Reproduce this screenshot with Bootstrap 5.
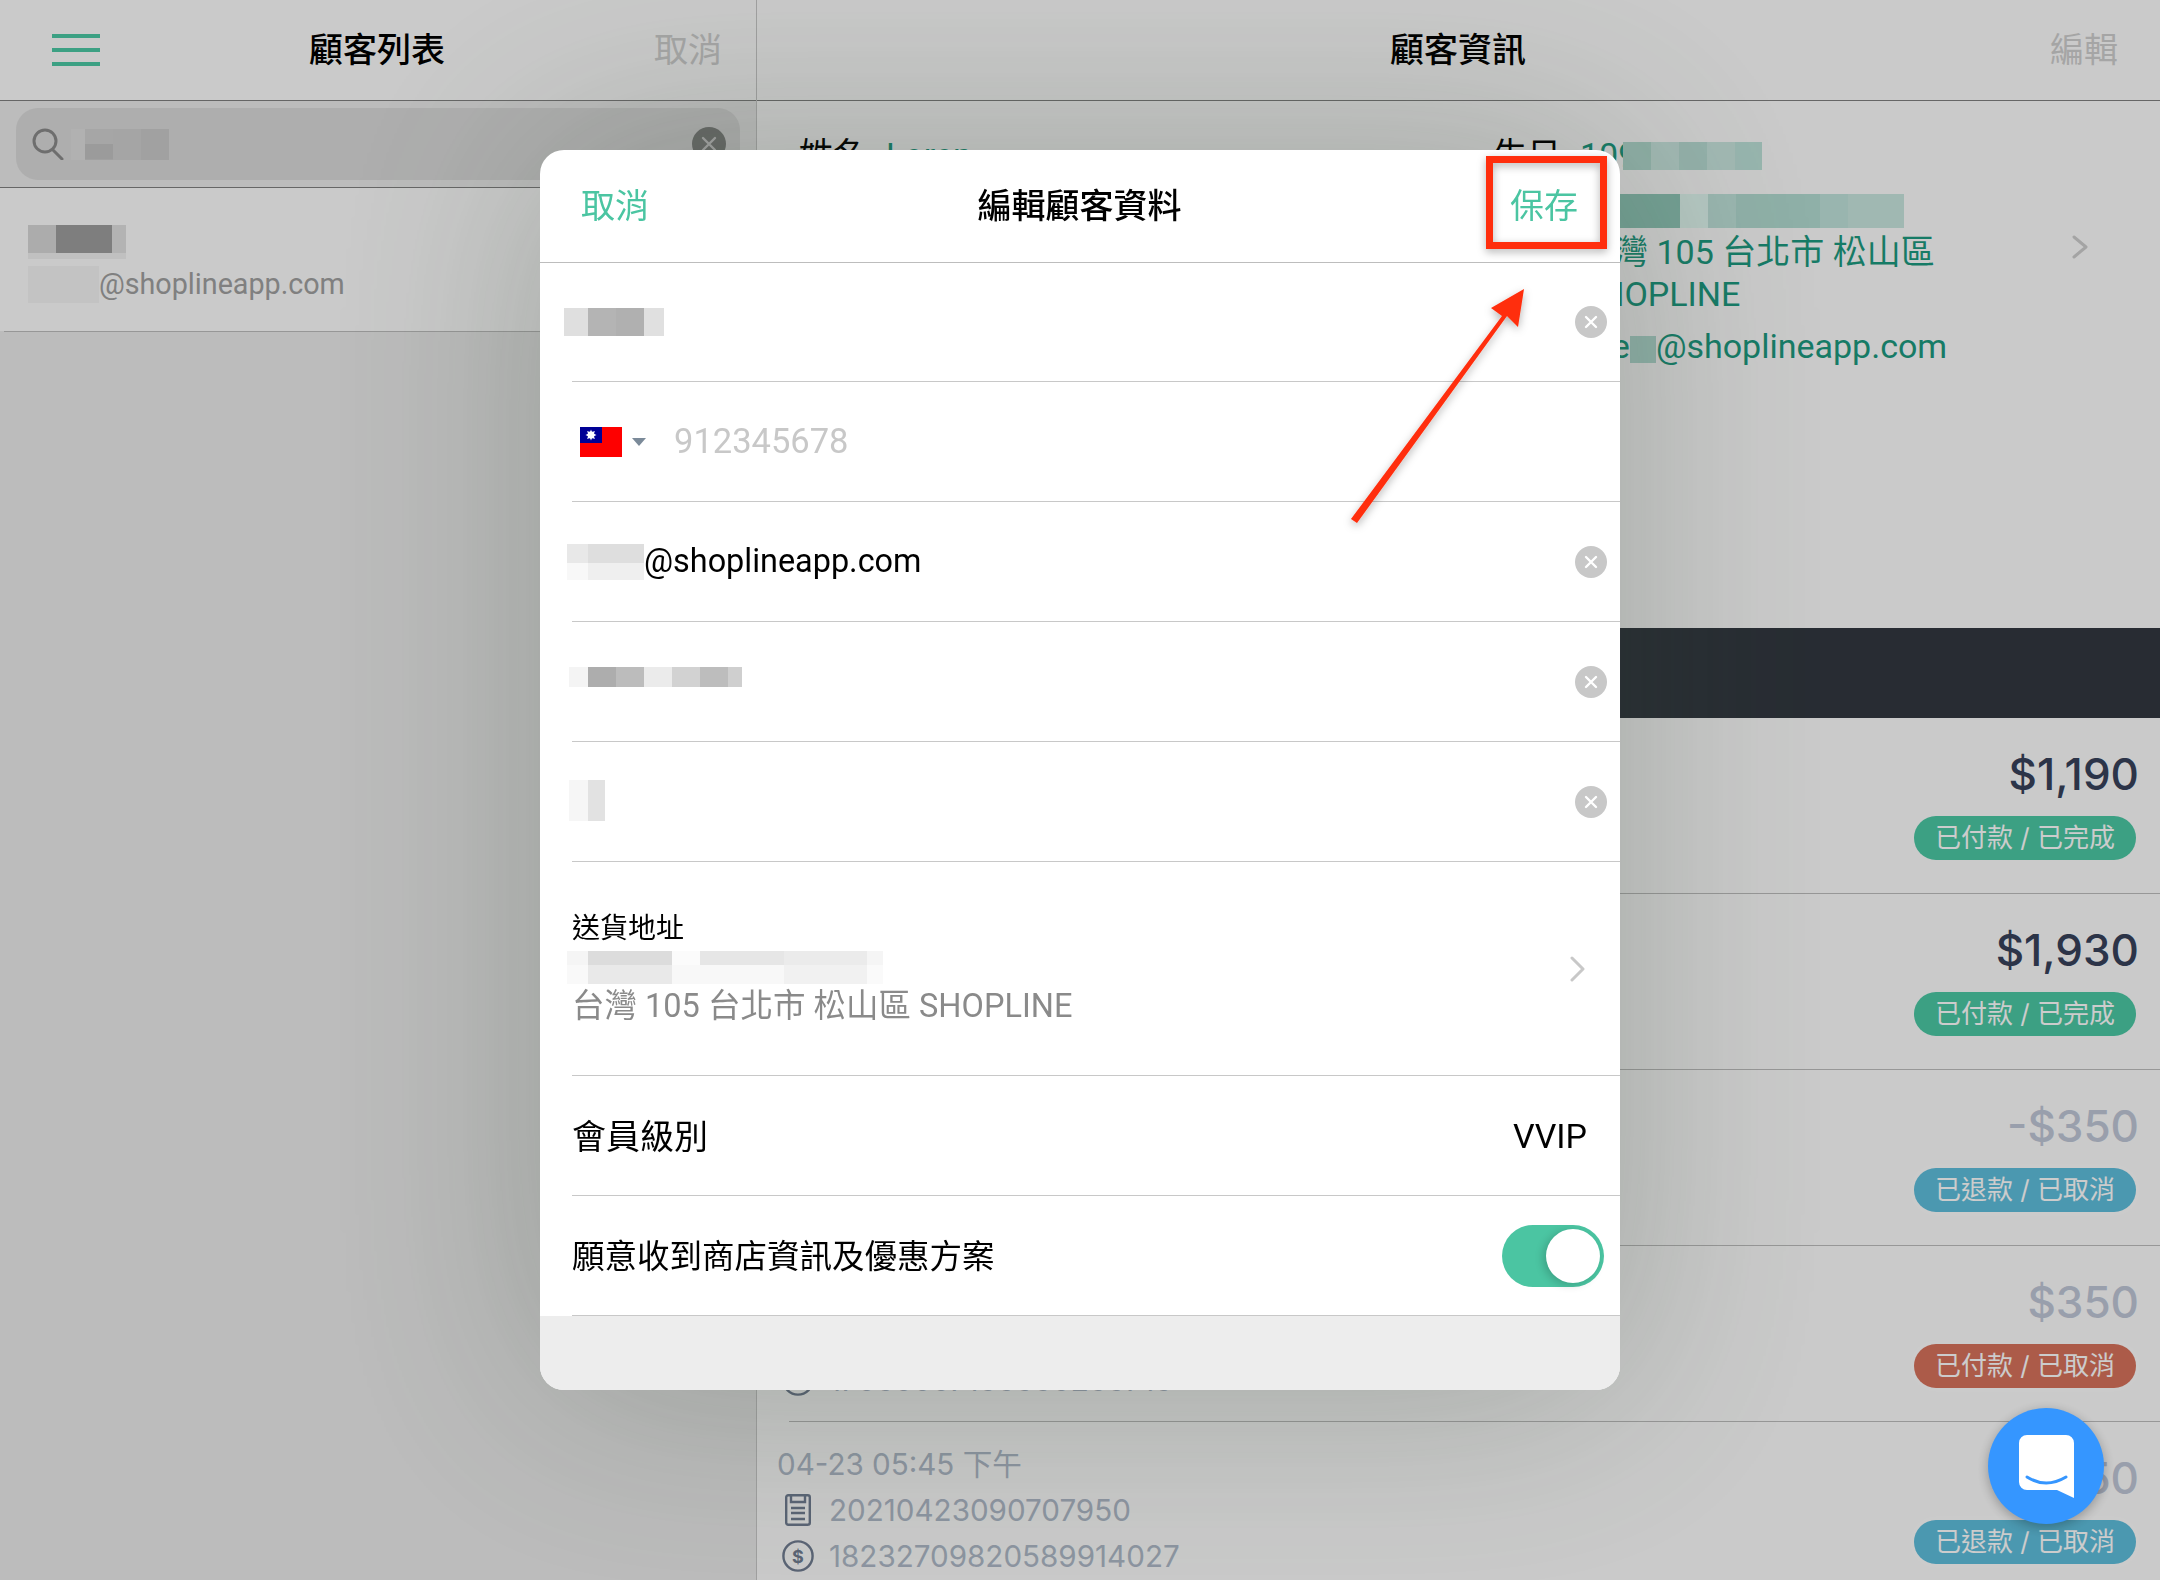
<!DOCTYPE html>
<html lang="zh-Hant">
<head>
  <meta charset="UTF-8" />
  <meta name="viewport" content="width=device-width, initial-scale=1" />
  <title>編輯顧客資料</title>
  <link href="https://cdn.jsdelivr.net/npm/bootstrap@5.3.0/dist/css/bootstrap.min.css" rel="stylesheet" />
  <style>
    html, body { height: 1580px; overflow: hidden; }
    body { font-family: Inter, "Noto Sans CJK TC", sans-serif; background: #fdfdfd; color: #000; }
    .app-shell { height: 1580px; }
    .left-pane { width: 757px; flex: none; background: #ebebeb; border-right: 1px solid #c8c8c8; }
    .right-pane { min-width: 0; }
    .rb { font-family: Roboto, "Noto Sans CJK TC", sans-serif; }
    .top-bar { height: 101px; background: #fdfdfd; border-bottom: 1px solid #808080; font-size: 34px; line-height: 1; }
    .top-bar .bar-title { font-weight: 500; }
    .bar-side { color: #cfcfcf; }
    .left-bar { padding: 0 34px 0 52px; }
    .right-bar { padding: 0 42px 0 0; }
    .title-gap { margin-left: 633px; }
    .ham { display: flex; flex-direction: column; gap: 10px; width: 48px; }
    .ham i { display: block; height: 4px; background: #4bc8a4; }
    .search-zone { height: 87px; padding: 7px 16px; border-bottom: 1px solid #808080; }
    .search-field { height: 72px; border-radius: 22px; background: #dadada; padding: 0 14px 0 16px; }
    .search-blur { width: 98px; height: 31px; margin-left: 7px; background: linear-gradient(90deg, #0000 0 14px, #c2c2c2 14px 42px, #0000 42px) 0 100% / 100% 50% no-repeat, linear-gradient(90deg, #dedede 0 14px, #d0d0d0 14px 42px, #cfcfcf 42px 70px, #cacaca 70px); }
    .search-clear { width: 34px; height: 34px; border-radius: 50%; background: #828482; flex: none; }
    .cust-item { height: 143px; background: #fdfdfd; padding: 37px 0 0 28px; }
    .cust-line { margin-left: 4px; border-bottom: 1px solid #bdbdbd; }
    .name-blur { width: 98px; height: 34px; background: linear-gradient(#0000 0 28px, #f0f0f0 28px), linear-gradient(90deg, #d7d7d7 0 28px, #9e9e9e 28px 84px, #e0e0e0 84px); }
    .item-mail { font-size: 28.7px; line-height: 37px; margin-top: 7px; color: #a0a0a0; }
    .mail-blur { display: inline-block; width: 71px; height: 37px; background: #f4f4f4; vertical-align: top; }
    .info-area { position: relative; height: 527px; padding: 33px 0 0 42px; font-size: 34px; line-height: 42px; background: #fdfdfd; }
    .info-label { width: 87px; flex: none; }
    .info-left { width: 694px; flex: none; }
    .info-teal { color: #1c9a80; }
    .info-blur-a { width: 139px; height: 28px; margin: 8px 0 0 -14px; background: linear-gradient(90deg, #b2dacf 0 28px, #cae7e0 28px 56px, #b9ddd5 56px 84px, #cae7e0 84px 112px, #bee2da 112px); }
    .info-blur-b { width: 324px; height: 34px; margin: 18px 0 0 87px; background: linear-gradient(90deg, #91c8b9 0 100px, #e2f9f2 100px 128px, #c0e3db 128px 156px, #b3dcd2 156px 240px, #c0e3db 240px 268px, #c8e6df 268px); }
    .info-values { margin: 3px 0 0 87px; }
    .info-mail-line { margin: 10px 0 0 -7px; }
    .info-mail-blur { display: inline-block; width: 26px; height: 27px; background: #b3dcd2; vertical-align: -5px; }
    .info-go { position: absolute; left: 1315px; top: 134px; }
    .dark-band { height: 90px; background: #323840; }
    .order-row { height: 176px; margin-left: 32px; padding: 19px 20px 0 0; border-bottom: 1px solid #bdbdbd; }
    .order-meta { color: #b0bac9; font-size: 29.6px; line-height: 46px; }
    .order-meta .date-line { margin-left: -12px; }
    .order-meta svg { width: 34px; flex: none; margin: 0 14px 0 -8px; }
    .order-amount { font-size: 44px; line-height: 54px; font-weight: 500; color: #37415a; text-align: right; margin-top: 10px; margin-right: 1px; }
    .order-amount.faded { color: #c0c7d7; }
    .order-pill { width: 222px; height: 44px; border-radius: 22px; line-height: 44px; text-align: center; color: #fff; font-size: 26px; margin-top: 15px; margin-right: 4px; }
    .pill-green { background: #4bc8a4; }
    .pill-blue { background: #5ebedc; box-shadow: 0 0 0 4px rgba(255,255,255,.35); }
    .pill-red { background: #d8725c; box-shadow: 0 0 0 4px rgba(255,255,255,.35); }
    .dim-layer { position: fixed; inset: 0; background: rgba(0,0,0,.2); padding-top: 150px; }
    .edit-sheet { width: 1080px; height: 1240px; border-radius: 24px; overflow: hidden; background: #fff; box-shadow: 0 0 220px rgba(50,70,50,.28); }
    .sheet-head { height: 113px; padding: 0 42px 0 41px; border-bottom: 1px solid #bdbdbd; font-size: 34px; color: #4bc5a2; }
    .sheet-title { color: #000; font-weight: 500; }
    .edit-row { height: 120px; margin-left: 32px; border-bottom: 1px solid #c8c8c8; padding-right: 13px; }
    .edit-row.first-row { height: 119px; }
    .edit-row.tall { height: 214px; padding-right: 34px; }
    .clear-dot { width: 32px; height: 32px; border-radius: 50%; background: #c8c8c8; flex: none; }
    .m-name { flex: none; width: 100px; height: 28px; margin: -1px 0 0 -8px; background: linear-gradient(90deg, #dfdfdf 0 24px, #b4b4b4 24px 52px, #b0b0b0 52px 80px, #e0e0e0 80px); }
    .m-mail { display: inline-block; width: 77px; height: 36px; margin-left: -5px; vertical-align: -8px; background: linear-gradient(90deg, #f8f8f8 0 21px, #efefef 21px) 0 100% / 100% 17px no-repeat, linear-gradient(90deg, #e8e8e8 0 21px, #dedede 21px); }
    .m-phone { flex: none; width: 173px; height: 20px; margin: -10px 0 0 -3px; background: linear-gradient(90deg, #f4f4f4 0 19px, #adadad 19px 47px, #bcbcbc 47px 75px, #ebebeb 75px 103px, #d2d2d2 103px 131px, #bdbdbd 131px 159px, #cfcfcf 159px); }
    .m-extra { flex: none; width: 36px; height: 41px; margin: -2px 0 0 -3px; background: linear-gradient(90deg, #f6f6f6 0 19px, #e2e2e2 19px); }
    .mail-text { font-size: 32.4px; }
    .phone-ph { font-size: 34.5px; color: #c8c8c8; margin-left: 28px; margin-top: 1px; }
    .flag-box { width: 42px; height: 30px; margin-left: 8px; flex: none; }
    .caret-tri { width: 14px; height: 8px; margin-left: 10px; flex: none; }
    .addr-title { font-size: 28px; line-height: 30px; margin-top: 2px; }
    .m-addr { width: 316px; height: 33px; margin: 7px 0 0 -5px; background: linear-gradient(90deg, #f9f9f9 0 21px, #e9e9e9 21px 105px, #f8f8f8 105px 217px, #f1f1f1 217px 300px, #fafafa 300px) 0 100% / 100% 19px no-repeat, linear-gradient(90deg, #f5f5f5 0 21px, #dcdcdc 21px 105px, #fbfbfb 105px 133px, #e6e6e6 133px 217px, #ebebeb 217px 300px, #f5f5f5 300px); }
    .addr-text { font-size: 32.5px; line-height: 38px; color: #8a8a8a; margin-top: 3px; }
    .row-label { font-size: 34px; margin-top: 3px; }
    .row-label.small-label { font-size: 32.5px; }
    .row-value { font-size: 34px; margin: 2px 20px 0 0; }
    .switch-track { width: 102px; height: 62px; border-radius: 31px; background: #4bc5a2; padding: 4px; margin-right: 3px; }
    .switch-knob { width: 54px; height: 54px; border-radius: 50%; background: #fff; box-shadow: -3px 2px 8px rgba(0,0,0,.18); }
    .sheet-foot { height: 76px; background: #ededed; }
    .note-layer { position: fixed; left: 0; top: 0; width: 2160px; height: 1580px; pointer-events: none; }
    .chat-btn { position: fixed; left: 1988px; top: 1408px; width: 116px; height: 116px; border-radius: 50%; background: #3596ff; box-shadow: 0 3px 12px rgba(0,0,0,.28); }
  </style>
</head>
<body>
<div class="app-shell d-flex">
  <aside class="left-pane">
    <div class="top-bar left-bar d-flex align-items-center justify-content-between">
      <span class="ham"><i></i><i></i><i></i></span>
      <span class="bar-title">顧客列表</span>
      <span class="bar-side">取消</span>
    </div>
    <div class="search-zone">
      <div class="search-field d-flex align-items-center">
        <svg width="32" height="32" viewBox="0 0 32 32" fill="none" stroke="#8a8a8a" stroke-width="3" stroke-linecap="round"><circle cx="13" cy="13" r="11"/><path d="M21 22l9 9"/></svg>
        <span class="search-blur"></span>
        <span class="search-clear ms-auto d-flex align-items-center justify-content-center"><svg width="16" height="16" viewBox="0 0 16 16" stroke="#ccc" stroke-width="2.4" stroke-linecap="round"><path d="M2 2l12 12M14 2L2 14"/></svg></span>
      </div>
    </div>
    <div class="cust-item">
      <div class="name-blur"></div>
      <div class="item-mail rb d-flex"><span class="mail-blur"></span>@shoplineapp.com</div>
    </div>
    <div class="cust-line"></div>
  </aside>

  <main class="right-pane flex-grow-1">
    <div class="top-bar right-bar d-flex align-items-center">
      <span class="bar-title title-gap">顧客資訊</span>
      <span class="bar-side ms-auto">編輯</span>
    </div>
    <div class="info-area rb d-flex">
      <div class="info-left d-flex">
        <span class="info-label">姓名</span><span class="info-teal">Loren</span>
      </div>
      <div>
        <div class="d-flex"><span class="info-label">生日</span><span class="info-teal">109</span><span class="info-blur-a"></span></div>
        <div class="info-blur-b"></div>
        <div class="info-teal info-values">
          <div>台灣 105 台北市 松山區</div>
          <div>SHOPLINE</div>
          <div class="info-mail-line">lore<span class="info-mail-blur"></span>@shoplineapp.com</div>
        </div>
      </div>
      <svg class="info-go" width="16" height="24" viewBox="0 0 16 24" fill="none" stroke="#cecece" stroke-width="3" stroke-linecap="round" stroke-linejoin="round"><path d="M2 2l12 10L2 22"/></svg>
    </div>
    <div class="dark-band"></div>
    <div id="orders"></div>
  </main>
</div>

<div class="dim-layer d-flex justify-content-center align-items-start">
  <section class="edit-sheet rb">
    <header class="sheet-head d-flex align-items-center justify-content-between">
      <span>取消</span>
      <span class="sheet-title">編輯顧客資料</span>
      <span>保存</span>
    </header>
    <div class="edit-row first-row d-flex align-items-center justify-content-between">
      <span class="m-name"></span>
      <span class="clear-dot d-flex align-items-center justify-content-center"><svg width="14" height="14" viewBox="0 0 14 14" stroke="#fff" stroke-width="2.4" stroke-linecap="round"><path d="M2 2l10 10M12 2L2 12"/></svg></span>
    </div>
    <div class="edit-row d-flex align-items-center">
      <svg class="flag-box" viewBox="0 0 42 30">
        <rect width="42" height="30" fill="#fe0000"/>
        <rect width="22" height="16" fill="#000095"/>
        <circle cx="11" cy="8" r="3.4" fill="#fff"/>
        <path d="M11 2.5l1 2.6 2.9-1-1 2.7 2.6 1.2-2.6 1.2 1 2.7-2.9-1-1 2.6-1-2.6-2.9 1 1-2.7L5.5 8l2.6-1.2-1-2.7 2.9 1z" fill="#fff"/>
      </svg>
      <svg class="caret-tri" viewBox="0 0 14 8"><path d="M0 0h14L7 8z" fill="#7b8a99"/></svg>
      <span class="phone-ph">912345678</span>
    </div>
    <div class="edit-row d-flex align-items-center justify-content-between">
      <span class="mail-text"><span class="m-mail"></span>@shoplineapp.com</span>
      <span class="clear-dot d-flex align-items-center justify-content-center"><svg width="14" height="14" viewBox="0 0 14 14" stroke="#fff" stroke-width="2.4" stroke-linecap="round"><path d="M2 2l10 10M12 2L2 12"/></svg></span>
    </div>
    <div class="edit-row d-flex align-items-center justify-content-between">
      <span class="m-phone"></span>
      <span class="clear-dot d-flex align-items-center justify-content-center"><svg width="14" height="14" viewBox="0 0 14 14" stroke="#fff" stroke-width="2.4" stroke-linecap="round"><path d="M2 2l10 10M12 2L2 12"/></svg></span>
    </div>
    <div class="edit-row d-flex align-items-center justify-content-between">
      <span class="m-extra"></span>
      <span class="clear-dot d-flex align-items-center justify-content-center"><svg width="14" height="14" viewBox="0 0 14 14" stroke="#fff" stroke-width="2.4" stroke-linecap="round"><path d="M2 2l10 10M12 2L2 12"/></svg></span>
    </div>
    <div class="edit-row tall d-flex align-items-center justify-content-between">
      <div>
        <div class="addr-title">送貨地址</div>
        <div class="m-addr"></div>
        <div class="addr-text">台灣 105 台北市 松山區 SHOPLINE</div>
      </div>
      <svg width="16" height="26" viewBox="0 0 16 26" fill="none" stroke="#c8c8c8" stroke-width="3" stroke-linecap="round" stroke-linejoin="round"><path d="M2 2l11 11L2 24"/></svg>
    </div>
    <div class="edit-row d-flex align-items-center justify-content-between">
      <span class="row-label">會員級別</span>
      <span class="row-value">VVIP</span>
    </div>
    <div class="edit-row d-flex align-items-center justify-content-between">
      <span class="row-label small-label">願意收到商店資訊及優惠方案</span>
      <span class="switch-track d-flex justify-content-end"><span class="switch-knob"></span></span>
    </div>
    <div class="sheet-foot"></div>
  </section>
</div>

<!-- 標註：紅框跟箭頭 -->
<svg class="note-layer" viewBox="0 0 2160 1580">
  <defs><filter id="noteShadow" x="-20%" y="-20%" width="140%" height="140%"><feDropShadow dx="0" dy="3" stdDeviation="4" flood-color="#000" flood-opacity=".3"/></filter></defs>
  <g filter="url(#noteShadow)">
    <rect x="1489.5" y="159.5" width="114" height="86" fill="none" stroke="#ff2d0a" stroke-width="7"/>
    <path d="M1351 519l6 4 150-207 11 11 6-38-33 19 11 8z" fill="#ff2d0a"/>
  </g>
</svg>

<button class="chat-btn border-0 p-0 d-flex align-items-center justify-content-center" type="button" aria-label="chat">
  <svg width="55" height="63" viewBox="0 0 55 63"><path d="M8 0h39a8 8 0 0 1 8 8v55l-17-8H8a8 8 0 0 1-8-8V8a8 8 0 0 1 8-8z" fill="#fff"/><path d="M8 42q19 12 39 0" fill="none" stroke="#3596ff" stroke-width="3" stroke-linecap="round"/></svg>
</button>

<script src="https://cdn.jsdelivr.net/npm/bootstrap@5.3.0/dist/js/bootstrap.bundle.min.js"></script>
<script>
  // 訂單列表
  const orders = [
    { date: '04-26 03:12 下午', no: '20210426151207120', pay: '18232709820589914011', amount: '$1,190', status: '已付款 / 已完成', pill: 'pill-green', faded: false },
    { date: '04-25 11:30 上午', no: '20210425113007410', pay: '18232709820589914015', amount: '$1,930', status: '已付款 / 已完成', pill: 'pill-green', faded: false },
    { date: '04-24 02:20 下午', no: '20210424142007230', pay: '18232709820589914019', amount: '-$350', status: '已退款 / 已取消', pill: 'pill-blue', faded: true },
    { date: '04-23 06:10 下午', no: '20210423181007610', pay: '17060007166660266716', amount: '$350', status: '已付款 / 已取消', pill: 'pill-red', faded: true },
    { date: '04-23 05:45 下午', no: '20210423090707950', pay: '18232709820589914027', amount: '-$350', status: '已退款 / 已取消', pill: 'pill-blue', faded: true }
  ];

  const clipIcon = '<svg height="32" viewBox="0 0 26 32" fill="none" stroke="#717d92" stroke-width="2.4"><rect x="1.2" y="1.2" width="23.6" height="29.6" rx="2"/><path d="M6 2v6h14V2M6 14h14M6 19h14M6 25h14"/></svg>';
  const payIcon = '<svg height="32" viewBox="0 0 32 32"><circle cx="16" cy="16" r="14.6" fill="none" stroke="#717d92" stroke-width="2.4"/><text x="16" y="22.5" text-anchor="middle" font-size="18" font-weight="700" fill="#717d92" font-family="Inter, sans-serif">$</text></svg>';

  const box = document.getElementById('orders');
  orders.forEach(o => {
    box.insertAdjacentHTML('beforeend', `
      <div class="order-row d-flex justify-content-between">
        <div class="order-meta">
          <div class="date-line">${o.date}</div>
          <div class="d-flex align-items-center">${clipIcon}${o.no}</div>
          <div class="d-flex align-items-center">${payIcon}${o.pay}</div>
        </div>
        <div class="d-flex flex-column align-items-end">
          <div class="order-amount ${o.faded ? 'faded' : ''}">${o.amount}</div>
          <div class="order-pill ${o.pill}">${o.status}</div>
        </div>
      </div>`);
  });
</script>
</body>
</html>
